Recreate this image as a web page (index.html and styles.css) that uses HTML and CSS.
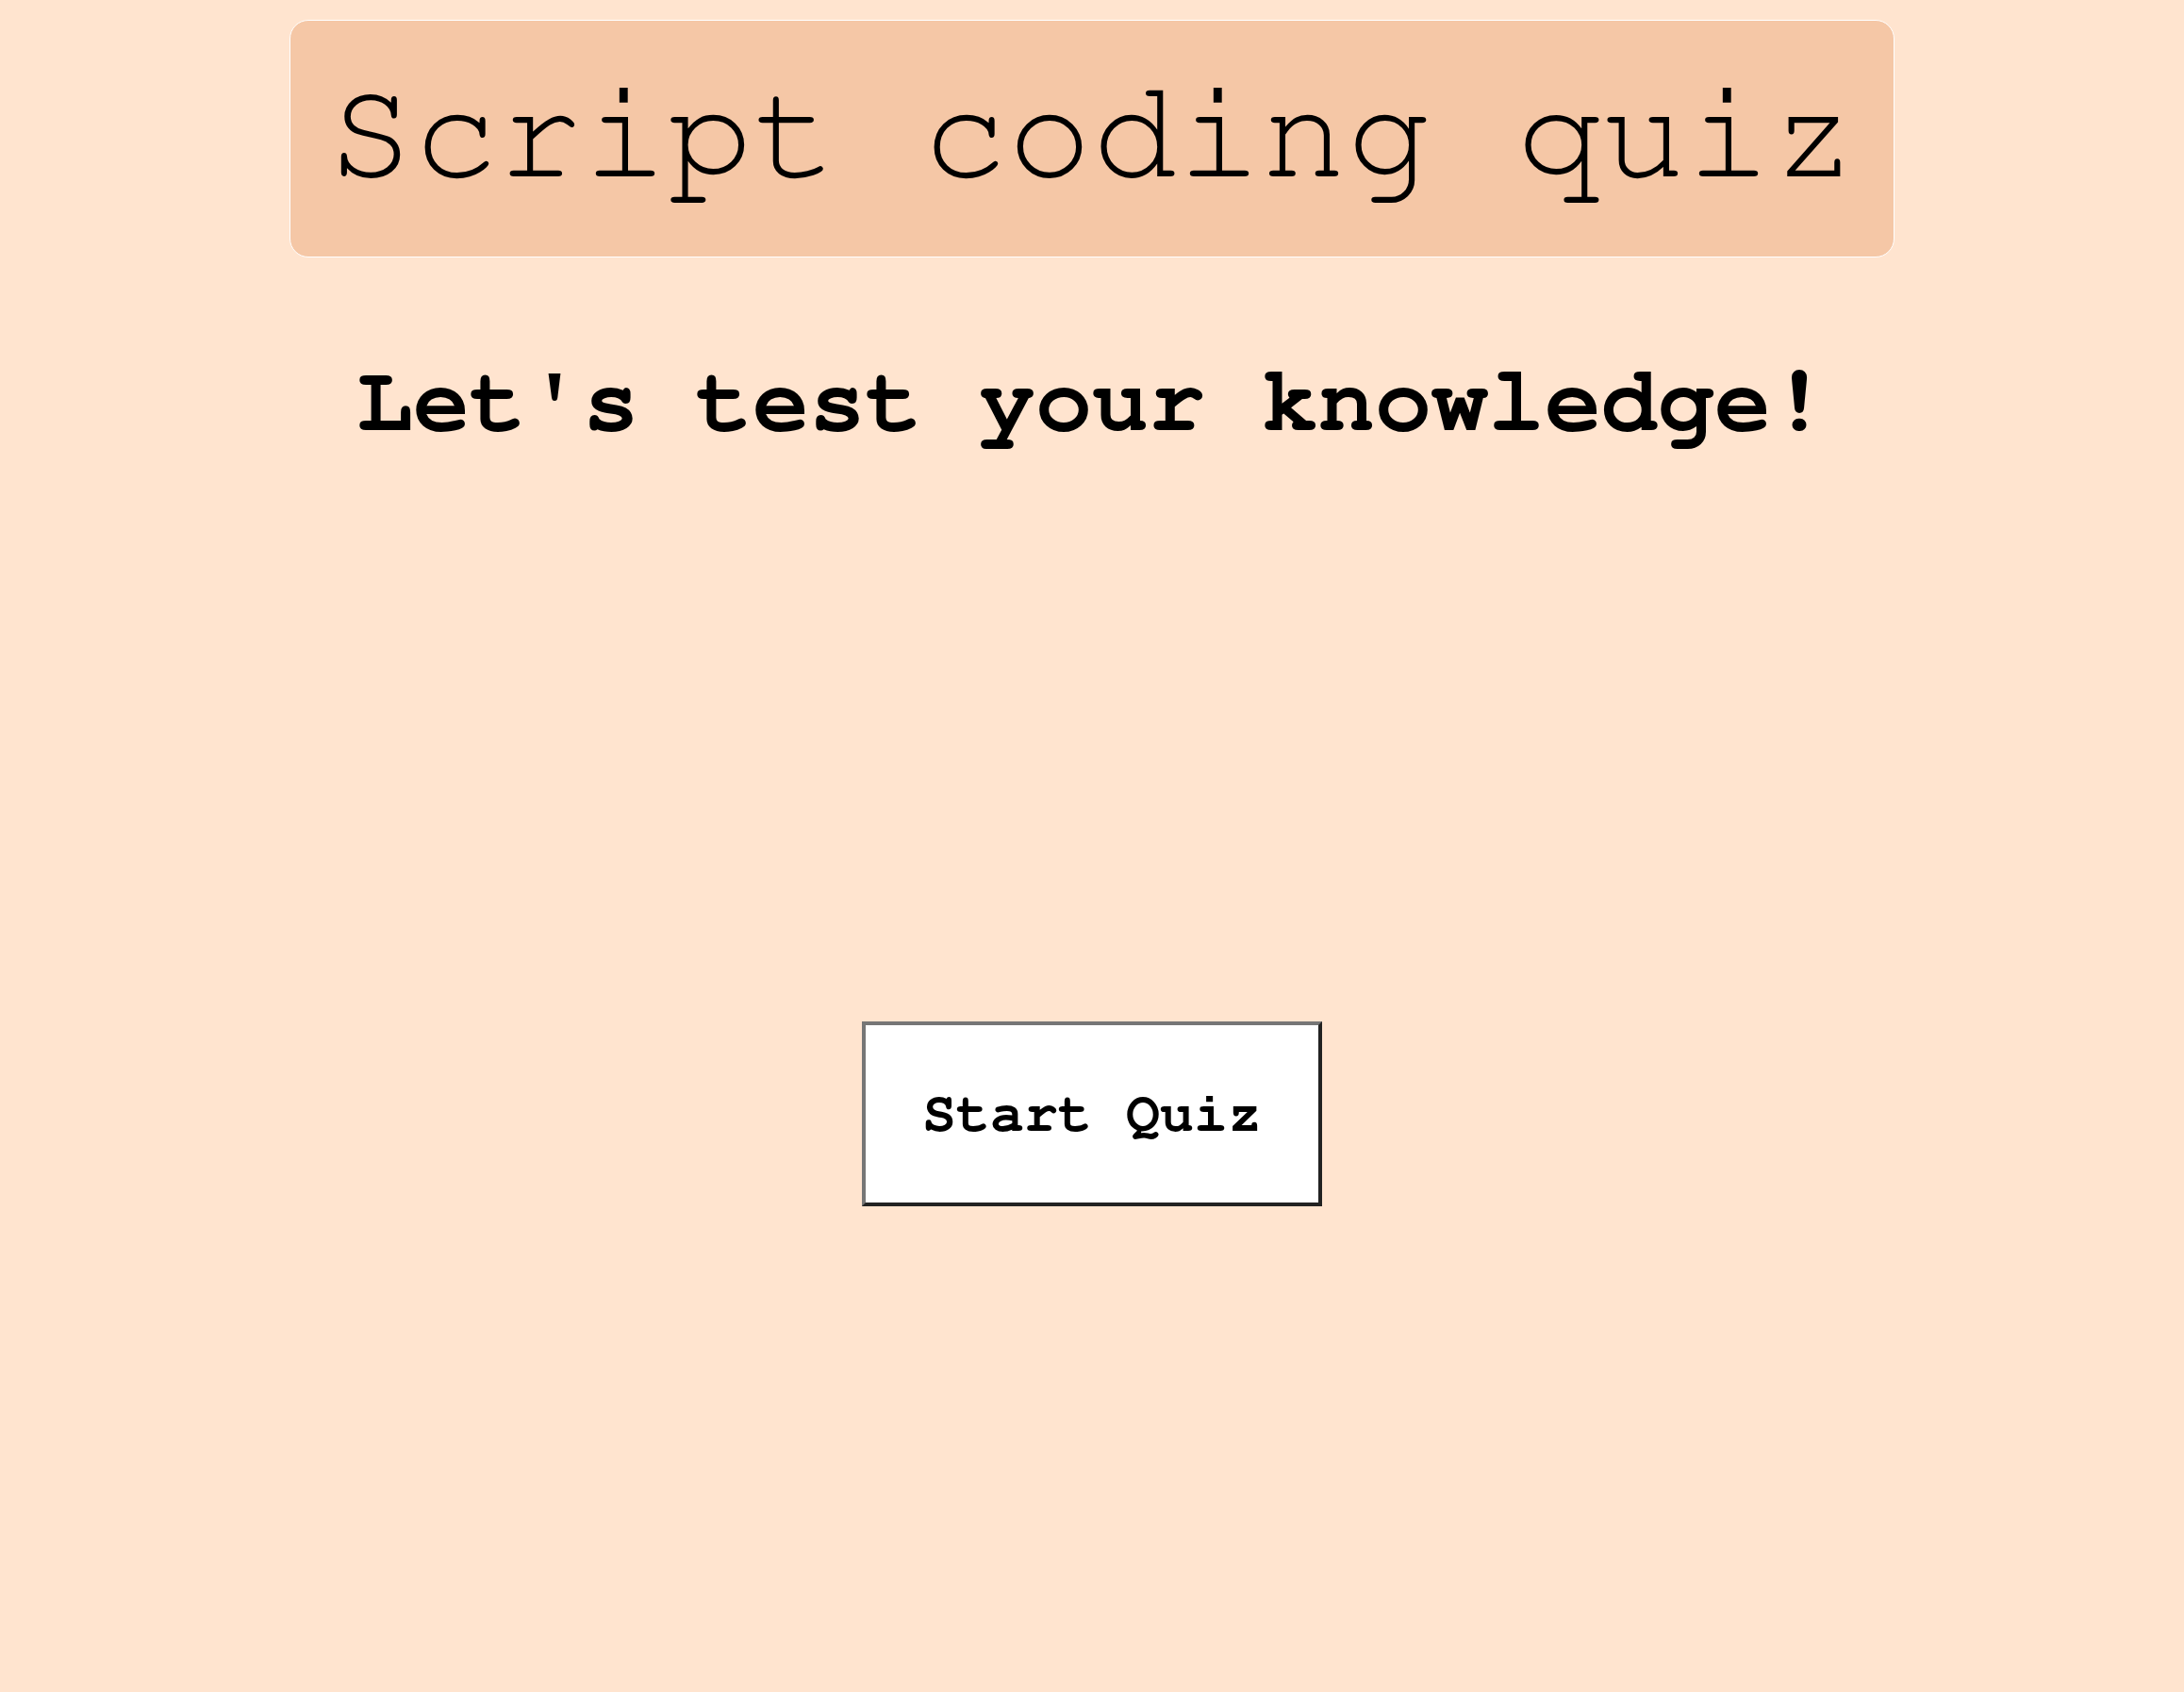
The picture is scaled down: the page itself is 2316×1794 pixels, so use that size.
FILE: index.html
```html
<!DOCTYPE html>
<html lang="en">
<head>
<meta charset="utf-8">
<title>Script coding quiz</title>
<link rel="stylesheet" href="styles.css">
</head>
<body>
<header class="banner">
  <h1 class="banner-title">Script coding quiz</h1>
</header>
<main class="intro">
  <h2 class="intro-heading">Let's test your knowledge!</h2>
  <div class="start-row">
    <button class="start-btn" type="button">Start Quiz</button>
  </div>
</main>
</body>
</html>
```

FILE: styles.css
```css
html, body {
  background: #ffe4cf;
}
body {
  margin: 8px;
  font-family: "Nimbus Mono PS", "Nimbus Mono L", "FreeMono", "Courier 10 Pitch", "Courier New", Courier, "Liberation Mono", monospace;
  color: #000;
}
.banner {
  width: 1700px;
  margin: 13px auto 0;
  background: #f5c7a6;
  border: 1px solid #ffffff;
  border-radius: 20px;
  padding: 35px 0 45px;
  text-align: center;
}
.banner-title {
  margin: 0;
  font-size: 150px;
  font-weight: normal;
  line-height: 170px;
}
.intro {
  display: flex;
  flex-direction: column;
  align-items: center;
}
.intro-heading {
  margin: 97px 0 0;
  font-size: 100px;
  font-weight: bold;
  line-height: 113px;
  text-align: center;
}
.start-row {
  margin-top: 600px;
  display: flex;
  justify-content: center;
}
.start-btn {
  font-family: inherit;
  font-size: 60px;
  font-weight: bold;
  line-height: 68px;
  color: #000;
  background: #ffffff;
  padding: 60px;
  border-style: solid;
  border-width: 4px;
  border-color: #767676 #222222 #222222 #767676;
  margin: 0;
}
```
